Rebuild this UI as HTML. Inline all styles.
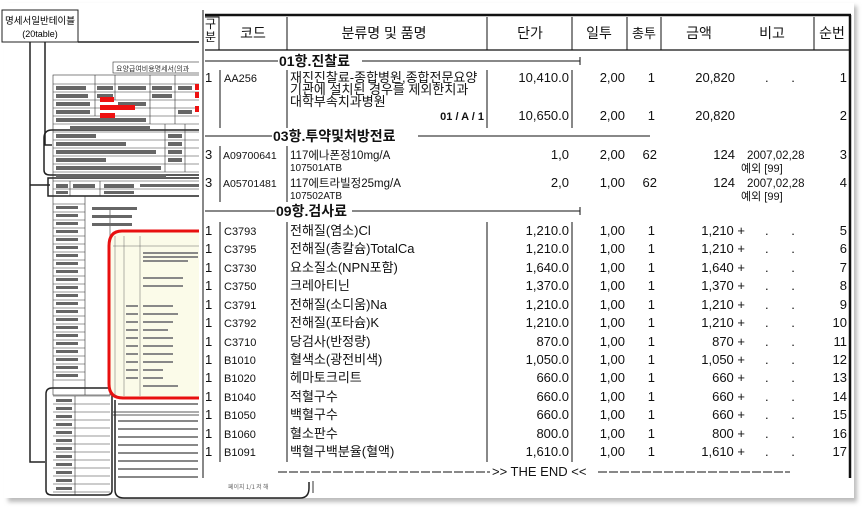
<!DOCTYPE html>
<html><head><meta charset="utf-8"><style>
html,body{margin:0;padding:0;background:#fff;width:863px;height:510px;overflow:hidden}
svg{display:block}
text{font-family:"Liberation Sans","Noto Sans CJK KR",sans-serif}
.k{font-family:"Noto Sans CJK KR","Liberation Sans",sans-serif}
.d{word-spacing:19px}
</style></head><body>
<svg width="863" height="510" viewBox="0 0 863 510" xmlns="http://www.w3.org/2000/svg">
<defs>
<filter id="sh" x="-5%" y="-5%" width="110%" height="110%"><feGaussianBlur stdDeviation="2"/></filter>
</defs>
<rect x="8" y="6" width="849" height="496" fill="#bbb" filter="url(#sh)"/>
<rect x="4" y="3" width="850" height="495" fill="#fff"/>

<rect x="2" y="10" width="76" height="32" fill="#fff" stroke="#222" stroke-width="1"/>
<text x="40" y="24" font-size="9.5" text-anchor="middle" class="k">명세서일반테이블</text>
<text x="40" y="37" font-size="9" text-anchor="middle">(20table)</text>
<g stroke="#222" stroke-width="1.5" fill="none">
<path d="M30 42 V462 H45"/>
<path d="M45 42 V145 H52"/>
<path d="M30 185 H50"/>
<path d="M78 42 H200"/>
<path d="M44 138 Q44 130 52 130 H200 M44 138 V170 Q44 175 50 175 H200"/>
<path d="M48 178 H200 V196 H48 Z"/>
<path d="M52 388 H108 Q112 388 112 394 V490 Q112 495 106 495 H52 Q46 495 46 490 V394 Q46 388 52 388"/>
<path d="M115 400 V490 Q115 498 124 498 H300 Q309 498 309 488 V480"/>
</g>
<g stroke="#333" stroke-width="0.6" fill="none">
<rect x="113" y="62" width="88" height="11"/>
<rect x="53" y="75" width="148" height="320"/>
<path d="M53 84 H201 M53 92 H201 M53 100 H201 M53 108 H201 M53 116 H201 M53 124 H201 M53 132 H201 M53 140 H201 M53 148 H201 M53 156 H201 M53 164 H201 M53 172 H201 M53 181 H201 M53 189 H201"/>
<path d="M95 75 V116 M115 75 V100 M150 75 V124 M175 75 V124 M165 124 V172 M185 124 V172 M70 181 V196 M100 181 V196"/>
<path d="M53 204 H85 M53 212 H85 M53 220 H85 M53 228 H85 M53 236 H85 M53 244 H85 M53 252 H85 M53 260 H85 M53 268 H85 M53 276 H85 M53 284 H85 M53 292 H85 M53 300 H85 M53 308 H85 M53 316 H85 M53 324 H85 M53 332 H85 M53 340 H85 M53 348 H85 M53 356 H85 M53 364 H85 M53 372 H85 M53 380 H85 M85 196 V395 M110 210 V395"/>
<path d="M53 396 H110 M53 404 H110 M53 412 H110 M53 420 H110 M53 428 H110 M53 436 H110 M53 444 H110 M53 452 H110 M53 460 H110 M53 468 H110 M53 476 H110 M53 484 H110 M53 492 H110 M75 396 V495"/>
</g>
<text x="116" y="71" font-size="7" class="k" fill="#333">요양급여비용명세서(의과</text>
<g fill="#666">
<rect x="56" y="86" width="30" height="4"/><rect x="97" y="86" width="16" height="4"/><rect x="118" y="86" width="28" height="4"/><rect x="56" y="94" width="32" height="4"/><rect x="97" y="94" width="16" height="4"/><rect x="56" y="102" width="34" height="4"/><rect x="56" y="110" width="34" height="4"/><rect x="118" y="102" width="28" height="4"/><rect x="152" y="86" width="20" height="4"/><rect x="152" y="94" width="20" height="4"/><rect x="178" y="86" width="14" height="4"/><rect x="178" y="110" width="14" height="4"/>
<rect x="56" y="118" width="90" height="4"/><rect x="70" y="126" width="80" height="4"/>
<rect x="56" y="134" width="40" height="4"/><rect x="56" y="142" width="70" height="4"/><rect x="56" y="150" width="100" height="4"/><rect x="56" y="158" width="50" height="4"/><rect x="56" y="166" width="105" height="4"/><rect x="56" y="174" width="110" height="4"/><rect x="168" y="134" width="14" height="4"/><rect x="168" y="142" width="14" height="4"/><rect x="168" y="150" width="14" height="4"/><rect x="168" y="158" width="14" height="4"/>
<rect x="56" y="184" width="12" height="4"/><rect x="73" y="184" width="22" height="4"/><rect x="104" y="184" width="30" height="4"/><rect x="140" y="184" width="60" height="3"/><rect x="56" y="191" width="12" height="3"/><rect x="104" y="191" width="30" height="3"/>
<rect x="56" y="206" width="22" height="3"/><rect x="56" y="214" width="22" height="3"/><rect x="56" y="222" width="22" height="3"/><rect x="56" y="230" width="22" height="3"/><rect x="56" y="238" width="22" height="3"/><rect x="56" y="246" width="22" height="3"/><rect x="56" y="254" width="22" height="3"/><rect x="56" y="262" width="22" height="3"/><rect x="56" y="270" width="22" height="3"/><rect x="56" y="278" width="22" height="3"/><rect x="56" y="286" width="22" height="3"/><rect x="56" y="294" width="22" height="3"/><rect x="56" y="302" width="22" height="3"/><rect x="56" y="310" width="22" height="3"/><rect x="56" y="318" width="22" height="3"/><rect x="56" y="326" width="22" height="3"/><rect x="56" y="334" width="22" height="3"/><rect x="56" y="342" width="22" height="3"/><rect x="56" y="350" width="22" height="3"/><rect x="56" y="358" width="22" height="3"/><rect x="56" y="366" width="22" height="3"/><rect x="56" y="374" width="22" height="3"/>
<rect x="56" y="399" width="16" height="3"/><rect x="56" y="407" width="16" height="3"/><rect x="56" y="415" width="16" height="3"/><rect x="56" y="423" width="16" height="3"/><rect x="56" y="431" width="16" height="3"/><rect x="56" y="439" width="16" height="3"/><rect x="56" y="447" width="16" height="3"/><rect x="56" y="455" width="16" height="3"/><rect x="56" y="463" width="16" height="3"/><rect x="56" y="471" width="16" height="3"/><rect x="56" y="479" width="16" height="3"/><rect x="56" y="487" width="16" height="3"/>
<rect x="92" y="207" width="45" height="3"/><rect x="92" y="215" width="40" height="3"/><rect x="92" y="223" width="40" height="3"/>
</g>
<g fill="#ee1111">
<rect x="100" y="97" width="14" height="5"/><rect x="100" y="105" width="35" height="5"/><rect x="100" y="113" width="15" height="5"/><rect x="195" y="84" width="6" height="6"/><rect x="195" y="92" width="6" height="6"/><rect x="195" y="106" width="6" height="6"/>
</g>
<path d="M203 231 H122 Q109 231 109 246 V384 Q109 398 123 398 H203" fill="#fbfbe9" stroke="#e81010" stroke-width="3"/>
<g stroke="#666" stroke-width="0.5" fill="none">
<path d="M115 236 V396 M124 236 V396 M140 236 V396 M113 246 H203"/>
</g>
<g fill="#888">
<rect x="143" y="252" width="55" height="2"/><rect x="143" y="256" width="55" height="2"/><rect x="143" y="260" width="45" height="2"/>
<rect x="143" y="277" width="40" height="2"/><rect x="143" y="285" width="40" height="2"/>
<rect x="143" y="305" width="30" height="2"/><rect x="143" y="313" width="35" height="2"/><rect x="143" y="321" width="30" height="2"/><rect x="143" y="329" width="25" height="2"/><rect x="143" y="337" width="30" height="2"/><rect x="143" y="345" width="30" height="2"/><rect x="143" y="353" width="30" height="2"/><rect x="143" y="361" width="30" height="2"/><rect x="143" y="369" width="20" height="2"/><rect x="143" y="377" width="20" height="2"/><rect x="143" y="385" width="35" height="2"/>
<rect x="126" y="305" width="12" height="2"/><rect x="126" y="313" width="12" height="2"/><rect x="126" y="321" width="12" height="2"/><rect x="126" y="329" width="12" height="2"/><rect x="126" y="337" width="12" height="2"/><rect x="126" y="345" width="12" height="2"/><rect x="126" y="353" width="12" height="2"/><rect x="126" y="361" width="12" height="2"/><rect x="126" y="369" width="12" height="2"/><rect x="126" y="377" width="12" height="2"/>
<rect x="118" y="403" width="80" height="2"/><rect x="118" y="420" width="80" height="2"/><rect x="118" y="428" width="80" height="2"/><rect x="118" y="436" width="80" height="2"/><rect x="118" y="444" width="80" height="2"/><rect x="118" y="452" width="80" height="2"/><rect x="118" y="460" width="80" height="2"/><rect x="118" y="468" width="80" height="2"/><rect x="118" y="476" width="80" height="2"/>
</g>
<path d="M113 412 H203 M113 415 H203" stroke="#222" stroke-width="0.8"/>

<rect x="199" y="8" width="655" height="474" fill="#fff"/>
<g stroke="#111" fill="none">
<path d="M203 10 V478" stroke-width="1"/>
<path d="M205 15 H851" stroke-width="2.5"/>
<path d="M205 50 H851" stroke-width="1.2"/>
<path d="M850 15 V478" stroke-width="2.5"/>
<path d="M219 17 V50 M287 17 V50 M487 17 V50 M572 17 V50 M627 17 V50 M661 17 V50 M814 17 V50" stroke-width="1"/>
<path d="M205 17 H219 V50" stroke-width="1"/>
<path d="M220 70 V128 M287 70 V128 M487 70 V128 M572 70 V128" stroke-width="1"/>
<path d="M220 146 V202 M287 146 V202" stroke-width="1"/>
<path d="M220 222 V462 M287 222 V462 M487 222 V462 M572 222 V462" stroke-width="1"/>
<path d="M205 61 H278 M362 61 H580 M580 57 V65" stroke-width="1"/>
<path d="M205 136 H272 M418 136 H650" stroke-width="1"/>
<path d="M205 211 H275 M352 211 H580 M580 207 V215" stroke-width="1"/>
<path d="M278 472 H490 M598 472 H790" stroke-width="1" stroke-dasharray="9 2"/>
</g>
<g class="k" font-size="14" fill="#111">
<text x="205" y="28" font-size="12">구</text><text x="205" y="41" font-size="12">분</text>
<text x="253" y="38" text-anchor="middle">코드</text>
<text x="384" y="38" text-anchor="middle">분류명 및 품명</text>
<text x="530" y="38" text-anchor="middle">단가</text>
<text x="599" y="38" text-anchor="middle">일투</text>
<text x="644" y="38" text-anchor="middle" font-size="13">총투</text>
<text x="699" y="38" text-anchor="middle">금액</text>
<text x="772" y="38" text-anchor="middle">비고</text>
<text x="832" y="38" text-anchor="middle">순번</text>
</g>
<g class="k" font-size="14" font-weight="bold" fill="#111">
<text x="279" y="66">01항.진찰료</text>
<text x="273" y="141">03항.투약및처방전료</text>
<text x="276" y="216">09항.검사료</text>
</g>
<g class="k" font-size="13" fill="#111">
<text x="205" y="82">1</text><text x="224" y="82" font-size="11">AA256</text>
<text x="290" y="82">재진진찰료-종합병원,종합전문요양</text>
<text x="290" y="94">기관에 설치된 경우를 제외한치과</text>
<text x="290" y="106">대학부속치과병원</text>
<text x="484" y="120" text-anchor="end" font-weight="bold" font-size="11">01 / A  / 1</text>
<text x="569" y="82" text-anchor="end">10,410.0</text><text x="625" y="82" text-anchor="end">2,00</text><text x="655" y="82" text-anchor="end">1</text><text x="735" y="82" text-anchor="end">20,820</text><text x="765" y="82" class="d">. .</text><text x="847" y="82" text-anchor="end">1</text>
<text x="569" y="120" text-anchor="end">10,650.0</text><text x="625" y="120" text-anchor="end">2,00</text><text x="655" y="120" text-anchor="end">1</text><text x="735" y="120" text-anchor="end">20,820</text><text x="847" y="120" text-anchor="end">2</text>
<text x="205" y="159">3</text><text x="223" y="159" font-size="10.5">A09700641</text><text x="290" y="159" font-size="11.5">117에나폰정10mg/A</text><text x="290" y="171" font-size="10">107501ATB</text>
<text x="569" y="159" text-anchor="end">1,0</text><text x="625" y="159" text-anchor="end">2,00</text><text x="657" y="159" text-anchor="end">62</text><text x="735" y="159" text-anchor="end">124</text><text x="747" y="159" font-size="11.5">2007,02,28</text><text x="741" y="172" font-size="11">예외 [99]</text><text x="847" y="159" text-anchor="end">3</text>
<text x="205" y="187">3</text><text x="223" y="187" font-size="10.5">A05701481</text><text x="290" y="187" font-size="11.5">117에트라빌정25mg/A</text><text x="290" y="199" font-size="10">107502ATB</text>
<text x="569" y="187" text-anchor="end">2,0</text><text x="625" y="187" text-anchor="end">1,00</text><text x="657" y="187" text-anchor="end">62</text><text x="735" y="187" text-anchor="end">124</text><text x="747" y="187" font-size="11.5">2007,02,28</text><text x="741" y="200" font-size="11">예외 [99]</text><text x="847" y="187" text-anchor="end">4</text>
</g>
<g class="k" font-size="13" fill="#111">
<text x="205" y="235">1</text><text x="224" y="235" font-size="11">C3793</text><text x="290" y="235">전해질(염소)Cl</text><text x="569" y="235" text-anchor="end">1,210.0</text><text x="625" y="235" text-anchor="end">1,00</text><text x="655" y="235" text-anchor="end">1</text><text x="745" y="235" text-anchor="end">1,210 +</text><text x="765" y="235" class="d">. .</text><text x="847" y="235" text-anchor="end">5</text>
<text x="205" y="253">1</text><text x="224" y="253" font-size="11">C3795</text><text x="290" y="253">전해질(총칼슘)TotalCa</text><text x="569" y="253" text-anchor="end">1,210.0</text><text x="625" y="253" text-anchor="end">1,00</text><text x="655" y="253" text-anchor="end">1</text><text x="745" y="253" text-anchor="end">1,210 +</text><text x="765" y="253" class="d">. .</text><text x="847" y="253" text-anchor="end">6</text>
<text x="205" y="272">1</text><text x="224" y="272" font-size="11">C3730</text><text x="290" y="272">요소질소(NPN포함)</text><text x="569" y="272" text-anchor="end">1,640.0</text><text x="625" y="272" text-anchor="end">1,00</text><text x="655" y="272" text-anchor="end">1</text><text x="745" y="272" text-anchor="end">1,640 +</text><text x="765" y="272" class="d">. .</text><text x="847" y="272" text-anchor="end">7</text>
<text x="205" y="290">1</text><text x="224" y="290" font-size="11">C3750</text><text x="290" y="290">크레아티닌</text><text x="569" y="290" text-anchor="end">1,370.0</text><text x="625" y="290" text-anchor="end">1,00</text><text x="655" y="290" text-anchor="end">1</text><text x="745" y="290" text-anchor="end">1,370 +</text><text x="765" y="290" class="d">. .</text><text x="847" y="290" text-anchor="end">8</text>
<text x="205" y="309">1</text><text x="224" y="309" font-size="11">C3791</text><text x="290" y="309">전해질(소디움)Na</text><text x="569" y="309" text-anchor="end">1,210.0</text><text x="625" y="309" text-anchor="end">1,00</text><text x="655" y="309" text-anchor="end">1</text><text x="745" y="309" text-anchor="end">1,210 +</text><text x="765" y="309" class="d">. .</text><text x="847" y="309" text-anchor="end">9</text>
<text x="205" y="327">1</text><text x="224" y="327" font-size="11">C3792</text><text x="290" y="327">전해질(포타슘)K</text><text x="569" y="327" text-anchor="end">1,210.0</text><text x="625" y="327" text-anchor="end">1,00</text><text x="655" y="327" text-anchor="end">1</text><text x="745" y="327" text-anchor="end">1,210 +</text><text x="765" y="327" class="d">. .</text><text x="847" y="327" text-anchor="end">10</text>
<text x="205" y="346">1</text><text x="224" y="346" font-size="11">C3710</text><text x="290" y="346">당검사(반정량)</text><text x="569" y="346" text-anchor="end">870.0</text><text x="625" y="346" text-anchor="end">1,00</text><text x="655" y="346" text-anchor="end">1</text><text x="745" y="346" text-anchor="end">870 +</text><text x="765" y="346" class="d">. .</text><text x="847" y="346" text-anchor="end">11</text>
<text x="205" y="364">1</text><text x="224" y="364" font-size="11">B1010</text><text x="290" y="364">혈색소(광전비색)</text><text x="569" y="364" text-anchor="end">1,050.0</text><text x="625" y="364" text-anchor="end">1,00</text><text x="655" y="364" text-anchor="end">1</text><text x="745" y="364" text-anchor="end">1,050 +</text><text x="765" y="364" class="d">. .</text><text x="847" y="364" text-anchor="end">12</text>
<text x="205" y="382">1</text><text x="224" y="382" font-size="11">B1020</text><text x="290" y="382">헤마토크리트</text><text x="569" y="382" text-anchor="end">660.0</text><text x="625" y="382" text-anchor="end">1,00</text><text x="655" y="382" text-anchor="end">1</text><text x="745" y="382" text-anchor="end">660 +</text><text x="765" y="382" class="d">. .</text><text x="847" y="382" text-anchor="end">13</text>
<text x="205" y="401">1</text><text x="224" y="401" font-size="11">B1040</text><text x="290" y="401">적혈구수</text><text x="569" y="401" text-anchor="end">660.0</text><text x="625" y="401" text-anchor="end">1,00</text><text x="655" y="401" text-anchor="end">1</text><text x="745" y="401" text-anchor="end">660 +</text><text x="765" y="401" class="d">. .</text><text x="847" y="401" text-anchor="end">14</text>
<text x="205" y="419">1</text><text x="224" y="419" font-size="11">B1050</text><text x="290" y="419">백혈구수</text><text x="569" y="419" text-anchor="end">660.0</text><text x="625" y="419" text-anchor="end">1,00</text><text x="655" y="419" text-anchor="end">1</text><text x="745" y="419" text-anchor="end">660 +</text><text x="765" y="419" class="d">. .</text><text x="847" y="419" text-anchor="end">15</text>
<text x="205" y="438">1</text><text x="224" y="438" font-size="11">B1060</text><text x="290" y="438">혈소판수</text><text x="569" y="438" text-anchor="end">800.0</text><text x="625" y="438" text-anchor="end">1,00</text><text x="655" y="438" text-anchor="end">1</text><text x="745" y="438" text-anchor="end">800 +</text><text x="765" y="438" class="d">. .</text><text x="847" y="438" text-anchor="end">16</text>
<text x="205" y="456">1</text><text x="224" y="456" font-size="11">B1091</text><text x="290" y="456">백혈구백분율(혈액)</text><text x="569" y="456" text-anchor="end">1,610.0</text><text x="625" y="456" text-anchor="end">1,00</text><text x="655" y="456" text-anchor="end">1</text><text x="745" y="456" text-anchor="end">1,610 +</text><text x="765" y="456" class="d">. .</text><text x="847" y="456" text-anchor="end">17</text>
</g>
<text x="492" y="476" font-size="13" fill="#111">&gt;&gt; THE END &lt;&lt;</text>
<text x="228" y="489" font-size="6" fill="#666" class="k">페이지 1/1 저 해</text>
<path d="M313 481 V493" stroke="#333" stroke-width="1"/>
</svg>
</body></html>
